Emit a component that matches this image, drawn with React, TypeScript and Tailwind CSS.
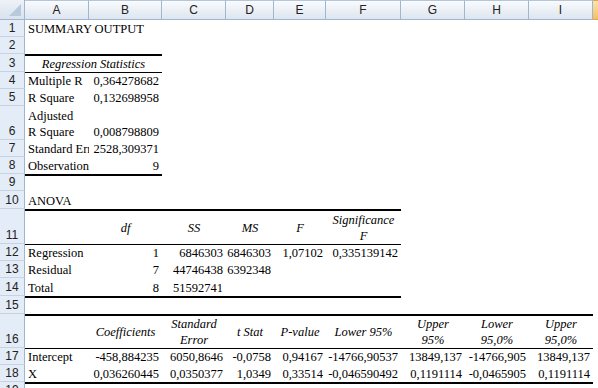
type Cell = { t?: string | string[]; a?: "l" | "r" | "c"; i?: boolean; clip?: boolean; span?: number };
type Row = { n: number; h: string; cells: Cell[]; top?: "thin" | "thick"; w?: number; head?: boolean };

const GRID = "grid grid-cols-[25px_64px_73px_64px_48px_52px_75px_64px_64px_64px_1fr]";
const COLS = ["A", "B", "C", "D", "E", "F", "G", "H", "I"];

const L = (t: string | string[], extra: Partial<Cell> = {}): Cell => ({ t, a: "l", ...extra });
const R = (t: string): Cell => ({ t, a: "r" });
const H = (t: string | string[]): Cell => ({ t, a: "c", i: true });
const E: Cell = {};

const rows: Row[] = [
  { n: 1, h: "h-[17px]", cells: [L("SUMMARY OUTPUT")] },
  { n: 2, h: "h-[17px]", cells: [] },
  { n: 3, h: "h-[18px]", top: "thick", w: 2, cells: [{ t: "Regression Statistics", a: "c", i: true, span: 2 }] },
  { n: 4, h: "h-[17px]", top: "thin", w: 2, cells: [L("Multiple R"), R("0,364278682")] },
  { n: 5, h: "h-[17px]", cells: [L("R Square"), R("0,132698958")] },
  { n: 6, h: "h-[34px]", cells: [L(["Adjusted", "R Square"]), R("0,008798809")] },
  { n: 7, h: "h-[17px]", cells: [L("Standard Error", { clip: true }), R("2528,309371")] },
  { n: 8, h: "h-[17px]", cells: [L("Observations", { clip: true }), R("9")] },
  { n: 9, h: "h-[17px]", top: "thick", w: 2, cells: [] },
  { n: 10, h: "h-[18px]", cells: [L("ANOVA")] },
  {
    n: 11, h: "h-[35px]", top: "thick", w: 6, head: true,
    cells: [E, H("df"), H("SS"), H("MS"), H("F"), H(["Significance", "F"])],
  },
  {
    n: 12, h: "h-[17px]", top: "thin", w: 6,
    cells: [L("Regression"), R("1"), R("6846303"), R("6846303"), R("1,07102"), R("0,335139142")],
  },
  { n: 13, h: "h-[17px]", cells: [L("Residual"), R("7"), R("44746438"), R("6392348")] },
  { n: 14, h: "h-[18px]", cells: [L("Total"), R("8"), R("51592741")] },
  { n: 15, h: "h-[18px]", top: "thick", w: 6, cells: [] },
  {
    n: 16, h: "h-[34px]", top: "thick", w: 9, head: true,
    cells: [
      E, H("Coefficients"), H(["Standard", "Error"]), H("t Stat"), H("P-value"),
      H("Lower 95%"), H(["Upper", "95%"]), H(["Lower", "95,0%"]), H(["Upper", "95,0%"]),
    ],
  },
  {
    n: 17, h: "h-[17px]", top: "thin", w: 9,
    cells: [
      L("Intercept"), R("-458,884235"), R("6050,8646"), R("-0,0758"), R("0,94167"),
      R("-14766,90537"), R("13849,137"), R("-14766,905"), R("13849,137"),
    ],
  },
  {
    n: 18, h: "h-[17px]",
    cells: [
      L("X"), R("0,036260445"), R("0,0350377"), R("1,0349"), R("0,33514"),
      R("-0,046590492"), R("0,1191114"), R("-0,0465905"), R("0,1191114"),
    ],
  },
  { n: 19, h: "h-[17px]", top: "thick", w: 9, cells: [] },
];

const SheetRow = ({ row }: { row: Row }) => {
  const out = [];
  let c = 0;
  while (c < 10) {
    const cell = row.cells[c] || E;
    const span = cell.span || 1;
    let border = "";
    if (row.top && c < (row.w || 0)) {
      border = row.top === "thick" ? "border-t-2 border-t-black" : "border-t border-t-black";
    }
    const justify = cell.a === "r" ? "justify-end pr-[3px]" : cell.a === "c" ? "justify-center" : "justify-start pl-[3px]";
    const lines = Array.isArray(cell.t) ? cell.t : cell.t ? [cell.t] : [];
    out.push(
      <div
        key={c}
        className={`flex ${row.head ? "items-center" : "items-end"} ${justify} ${span === 2 ? "col-span-2" : ""} ${
          cell.clip ? "overflow-hidden" : ""
        } ${border} whitespace-nowrap`}
      >
        {lines.length > 0 && (
          <div className={`leading-[16px] ${cell.i ? "italic" : ""} ${cell.a === "c" ? "text-center" : ""}`}>
            {lines.map((l, k) => (
              <div key={k}>{l}</div>
            ))}
          </div>
        )}
      </div>
    );
    c += span;
  }
  return (
    <div className={`${GRID} ${row.h}`}>
      <div className="flex items-end justify-center bg-[#e4ecf7] border-r border-r-[#9eb6ce] border-b border-b-[#c5d3e3] text-[12px] leading-[15px] text-[#222] font-['Liberation_Sans',sans-serif]">
        {row.n}
      </div>
      {out}
    </div>
  );
};

export default function App() {
  return (
    <div className="w-[598px] h-[388px] overflow-hidden bg-white text-black text-[12.5px] font-['Liberation_Serif',serif]">
      {/* column headers */}
      <div className={`${GRID} h-[20px] font-['Liberation_Sans',sans-serif] text-[12px] text-[#222]`}>
        <div className="relative bg-gradient-to-b from-[#eef2f8] to-[#d9e2ee] border-r border-b border-[#9eb6ce]">
          <svg className="absolute right-[3px] bottom-[3px]" width="12" height="12" viewBox="0 0 12 12">
            <polygon points="12,0 12,12 0,12" fill="#b8c9dc" />
          </svg>
        </div>
        {COLS.map((c) => (
          <div
            key={c}
            className="flex items-center justify-center bg-gradient-to-b from-[#f9fbfd] to-[#dde5ef] border-r border-r-[#9eb6ce] border-b border-b-[#9eb6ce] border-t border-t-[#b6c6d8]"
          >
            {c}
          </div>
        ))}
        <div className="bg-gradient-to-b from-[#fbe2ad] to-[#f4c15e] border-b border-b-[#e2a64a] border-t border-t-[#e2a64a]" />
      </div>
      {rows.map((r) => (
        <SheetRow key={r.n} row={r} />
      ))}
    </div>
  );
}
